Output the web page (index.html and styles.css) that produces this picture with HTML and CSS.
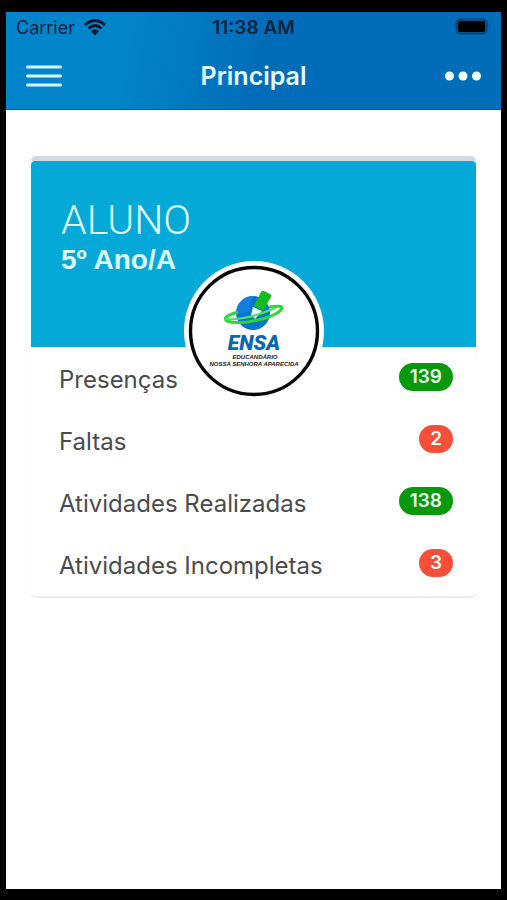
FILE: index.html
```html
<!DOCTYPE html>
<html lang="pt-BR">
<head>
  <meta charset="utf-8">
  <meta name="viewport" content="width=device-width, initial-scale=1">
  <title>Principal</title>
  <link rel="stylesheet" href="styles.css">
</head>
<body>
  <div class="phone">
    <header class="topbar">
      <div class="status">
        <div class="carrier">
          <span>Carrier</span>
          <svg class="wifi" viewBox="0 0 24 18" aria-hidden="true">
            <path d="M2 7Q12-2 22 7M5.500 10.500Q12 4.500 18.500 10.500" fill="none" stroke="currentColor" stroke-width="3"/>
            <path d="M8 13Q12 9.500 16 13L12 17.500Z" fill="currentColor"/>
          </svg>
        </div>
        <time class="clock">11:38 AM</time>
        <svg class="battery" viewBox="0 0 36 18" aria-hidden="true">
          <rect x="1" y="1" width="31" height="15" rx="4" fill="#004f86" stroke="#07446f"/>
          <rect x="3" y="3" width="27" height="11" rx="2" fill="#000"/>
          <path d="M34 6Q36 8.500 34 11Z" fill="#07446f"/>
        </svg>
      </div>
      <nav class="navbar">
        <button class="icon-button" type="button" aria-label="Menu">
          <svg class="menu-icon" viewBox="0 0 36 24" aria-hidden="true">
            <path d="M1.500 3H34.500M1.500 12H34.500M1.500 21H34.500" stroke="#d8fcff" stroke-width="3" stroke-linecap="round"/>
          </svg>
        </button>
        <h1 class="title">Principal</h1>
        <button class="icon-button more" type="button" aria-label="Mais opções">
          <svg class="more-icon" viewBox="0 0 36 10" aria-hidden="true">
            <g fill="#f2ffff"><circle cx="4.500" cy="5" r="4.500"/><circle cx="18" cy="5" r="4.500"/><circle cx="31.500" cy="5" r="4.500"/></g>
          </svg>
        </button>
      </nav>
    </header>
    <main class="content">
      <section class="card">
        <div class="hero">
          <h2 class="name">ALUNO</h2>
          <p class="grade">5º Ano/A</p>
          <svg class="logo" viewBox="0 0 140 140" role="img" aria-label="ENSA Educandário Nossa Senhora Aparecida">
            <circle cx="70" cy="70" r="70" fill="#fff"/>
            <circle cx="70" cy="70" r="63.500" fill="#fff" stroke="#090607" stroke-width="3.400"/>
            <circle cx="69" cy="52" r="17" fill="#0874c9"/>
            <path d="M53 47Q58 35 70 35Q64 44 66 50Q58 54 53 52Z" fill="#147fdf"/>
            <path d="M69 46L78 50L71 58L67 54Z" fill="#eafff8"/>
            <path d="M70 45L77 31Q78 29 80 30L86 33Q88 34 87 36L79 50Z" fill="#13bd20"/>
            <path d="M85 46Q98 44 98 47Q96 53 78 58Q55 64 43 60Q37 56 54 51" fill="none" stroke="#2ed63a" stroke-width="3"/>
            <path d="M41 58Q62 60 91 47" fill="none" stroke="#45e85b" stroke-width="2"/>
            <text class="logo-name" x="70" y="89" text-anchor="middle">ENSA</text>
            <text class="logo-caption" x="71" y="98" text-anchor="middle">EDUCANDÁRIO</text>
            <text class="logo-caption" x="70" y="105" text-anchor="middle">NOSSA SENHORA APARECIDA</text>
          </svg>
        </div>
        <ul class="stats">
          <li class="stat"><span>Presenças</span><span class="badge good">139</span></li>
          <li class="stat"><span>Faltas</span><span class="badge bad">2</span></li>
          <li class="stat"><span>Atividades Realizadas</span><span class="badge good">138</span></li>
          <li class="stat"><span>Atividades Incompletas</span><span class="badge bad">3</span></li>
        </ul>
      </section>
    </main>
  </div>
</body>
</html>
```
FILE: styles.css
```css
* {
  box-sizing: border-box;
}

body {
  margin: 0;
  background: #000;
  font-family: Inter, "Liberation Sans", sans-serif;
}

h1, h2, p, ul {
  margin: 0;
  padding: 0;
}

.phone {
  display: flex;
  flex-direction: column;
  min-height: 100vh;
  border: solid #000;
  border-width: 12px 6px 11px;
  background: #fff;
}

.topbar {
  height: 98px;
  border-bottom: 1px solid #075f9c;
  background: linear-gradient(100deg, #0284ca 25%, #016cb7 52%);
}

.status {
  display: grid;
  grid-template-columns: 1fr auto 1fr;
  align-items: center;
  height: 30px;
  padding: 0 10px;
  color: #03243f;
  font-size: 18px;
}

.carrier {
  display: flex;
  align-items: center;
  gap: 8px;
}

.wifi {
  width: 24px;
  height: 18px;
  color: #021626;
}

.clock {
  font-size: 19px;
  font-weight: 600;
}

.battery {
  justify-self: end;
  width: 36px;
  height: 18px;
}

.navbar {
  display: grid;
  grid-template-columns: 1fr auto 1fr;
  align-items: center;
  height: 68px;
  padding: 0 20px;
}

.icon-button {
  display: flex;
  justify-self: start;
  padding: 0;
  border: 0;
  background: none;
}

.more {
  justify-self: end;
}

.menu-icon {
  width: 36px;
  height: 24px;
}

.more-icon {
  width: 36px;
  height: 10px;
}

.title {
  color: #e6fdff;
  font-size: 25px;
  font-weight: 600;
}

.content {
  padding: 46px 25px;
}

.card {
  border-top: 5px solid #d3d9e5;
  border-bottom: 2px solid #ececec;
  border-radius: 5px;
  box-shadow: 0 0 1px #e8e8e8;
}

.hero {
  position: relative;
  height: 186px;
  padding: 37px 30px;
  border-radius: 4px 4px 0 0;
  background: #04a9d7;
  color: #dcfdff;
}

.name {
  font: 300 41px/44px Roboto, sans-serif;
}

.grade {
  font: 700 28px/36px "Liberation Sans", sans-serif;
}

.logo {
  position: absolute;
  bottom: -54px;
  left: 50%;
  width: 140px;
  height: 140px;
  transform: translateX(-50%);
}

.logo-name {
  fill: #0668b1;
  font: italic 900 21px Roboto, sans-serif;
}

.logo-caption {
  fill: #241c20;
  font: italic 700 6px "Liberation Sans", sans-serif;
}

.stats {
  padding: 1px 23px 0 28px;
  list-style: none;
}

.stat {
  display: flex;
  justify-content: space-between;
  align-items: center;
  height: 62px;
  color: #4b4b4d;
  font-size: 24px;
}

.badge {
  margin-bottom: 4px;
  padding: 0 11px;
  border-radius: 14px;
  color: #e9fff0;
  font-size: 19px;
  font-weight: 600;
  line-height: 28px;
}

.good {
  background: #08980b;
}

.bad {
  background: #f94f3a;
}
```
